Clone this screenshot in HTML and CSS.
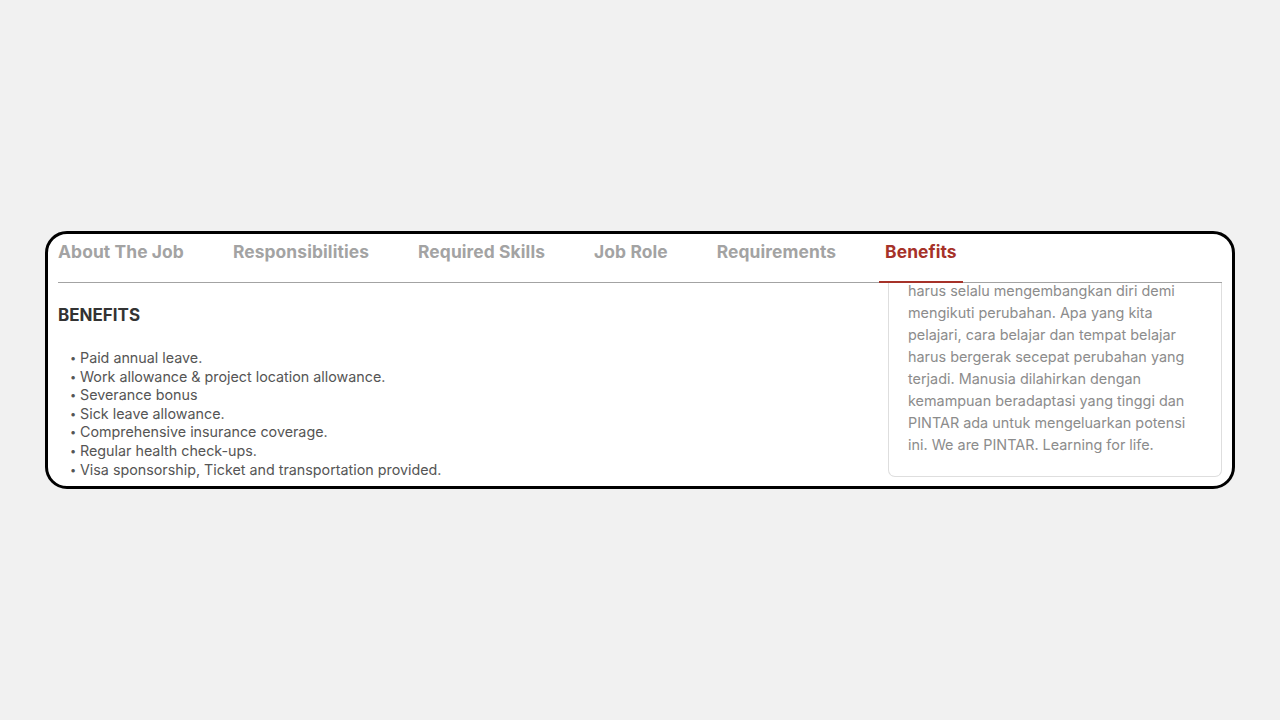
FILE: index.html
```html
<!DOCTYPE html>
<html lang="en">
<head>
    <meta charset="UTF-8">
    <meta name="viewport" content="width=device-width, initial-scale=1.0">
    <title>Job Detail - Benefits</title>
    <link rel="stylesheet" href="styles.css">
</head>
<body>
    <section class="card">
        <nav class="tabs">
            <div class="tab">About The Job</div>
            <div class="tab">Responsibilities</div>
            <div class="tab">Required Skills</div>
            <div class="tab">Job Role</div>
            <div class="tab">Requirements</div>
            <div class="tab active">Benefits</div>
        </nav>
        <div class="content">
            <div class="main">
                <h3>BENEFITS</h3>
                <ul class="list">
                    <li>Paid annual leave.</li>
                    <li>Work allowance &amp; project location allowance.</li>
                    <li>Severance bonus</li>
                    <li>Sick leave allowance.</li>
                    <li>Comprehensive insurance coverage.</li>
                    <li>Regular health check-ups.</li>
                    <li>Visa sponsorship, Ticket and transportation provided.</li>
                </ul>
            </div>
            <aside class="about">
                <p>harus selalu mengembangkan diri demi mengikuti perubahan. Apa yang kita pelajari, cara belajar dan tempat belajar harus bergerak secepat perubahan yang terjadi. Manusia dilahirkan dengan kemampuan beradaptasi yang tinggi dan PINTAR ada untuk mengeluarkan potensi ini. We are PINTAR. Learning for life.</p>
            </aside>
        </div>
    </section>
</body>
</html>
```

FILE: styles.css
```css
*{
    margin: 0;
    padding: 0;
    box-sizing: border-box;
}
body{
    background-color: #f1f1f1;
    font-family: Inter, "Noto Sans", sans-serif;
}
.card{
    margin: 231px 0 0 45px;
    width: 1190px;
    height: 258px;
    background-color: #fff;
    border: 3px solid #000;
    border-radius: 22px;
    overflow: hidden;
    padding: 0 10px;
}
.tabs{
    display: flex;
    gap: 49px;
    height: 49px;
    border-bottom: 1px solid #a3a3a3;
}
.tab{
    position: relative;
    padding-top: 6px;
    font-size: 17.4px;
    line-height: 24px;
    font-weight: 700;
    letter-spacing: 0.1px;
    color: #a3a3a3;
}
.tab.active{
    color: #a63229;
}
.tab.active::after{
    content: "";
    position: absolute;
    left: -6px;
    right: -6px;
    bottom: -1px;
    height: 2px;
    background-color: #a63229;
}
.content{
    display: flex;
    justify-content: space-between;
}
.main h3{
    margin-top: 21px;
    font-size: 17px;
    line-height: 22px;
    font-weight: 700;
    color: #333;
}
.list{
    list-style: none;
    margin-top: 23px;
    padding-left: 12px;
}
.list li{
    font-size: 14.3px;
    line-height: 18.6px;
    color: #555;
}
.list li::before{
    content: "\2022";
    display: inline-block;
    width: 10px;
    font-size: 11px;
    line-height: 10px;
    vertical-align: 1px;
}
.about{
    width: 334px;
    height: 194px;
    border: 1px solid #dedede;
    border-top: none;
    border-radius: 0 0 7px 7px;
    padding: 0 30px 18px 19px;
    overflow: hidden;
}
.about p{
    margin-top: -3px;
    font-size: 14.4px;
    line-height: 22px;
    color: #8c8c8c;
}
```
